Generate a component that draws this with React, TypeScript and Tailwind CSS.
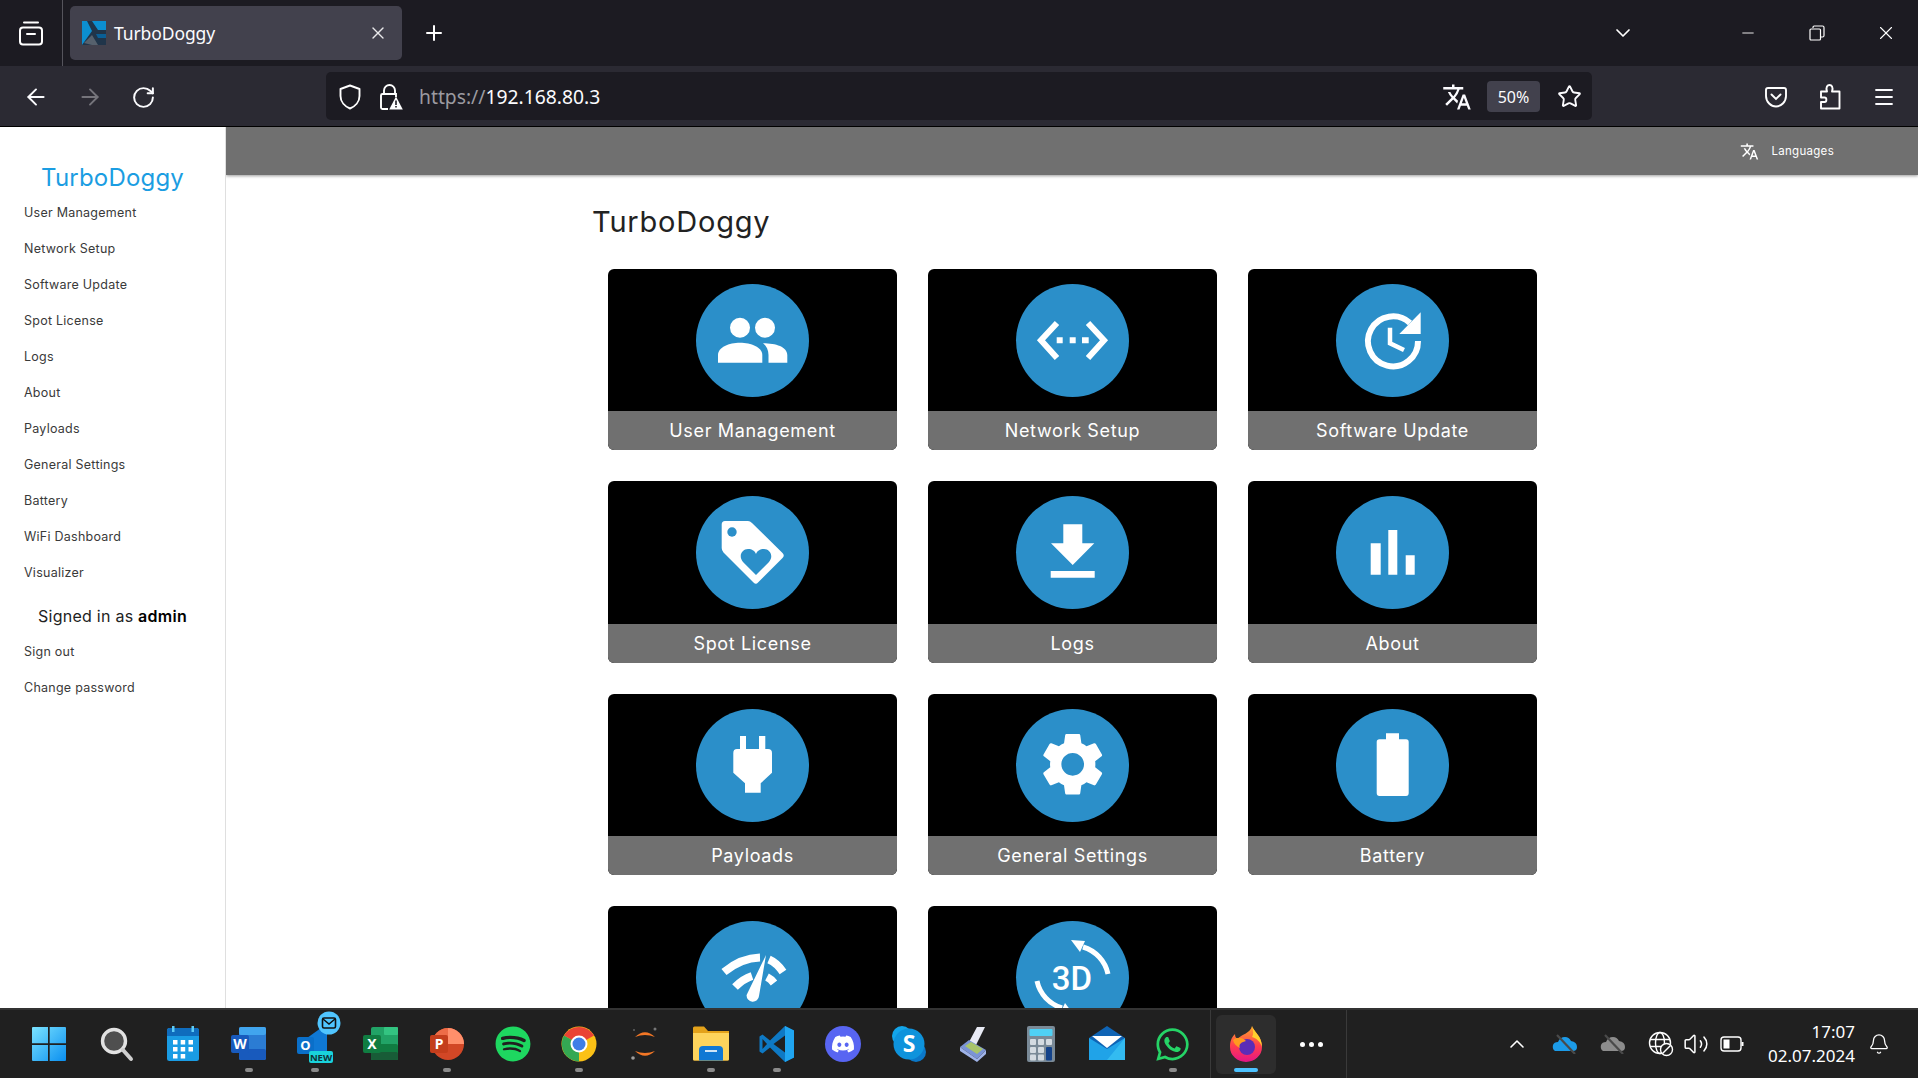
import React from "react";
import { ArrowLeft, ArrowRight, RotateCw, Star, Menu, X, Plus, ChevronDown, ChevronUp, Minus, Bell, Volume2 } from "lucide-react";
import { MdTranslate } from "react-icons/md";
import { FaDiscord, FaSpotify, FaWhatsapp } from "react-icons/fa";

const W = { fill: "#fff" };

const cardIcons: Record<string, React.ReactNode> = {
  users: (
    <g {...W}>
      <circle cx="44" cy="43.7" r="10" />
      <circle cx="69" cy="43.7" r="10" />
      <path d="M22 78.7V71C22 63 33 58.7 44 58.7S66.3 63 66.3 71V78.7Z" />
      <path d="M67 59.3C80 59.3 91.3 63 91.3 71V78.7H72.5V71C72.5 66 70.5 62 67 59.3Z" />
    </g>
  ),
  net: (
    <g>
      <path d="M41 39 25 56.3 41 74M72 39 88 56.3 72 74" fill="none" stroke="#fff" strokeWidth="6" />
      <path d="M40.7 53.3h6v6h-6zM53.7 53.3h6v6h-6zM66 53.3h6.7v6H66z" fill="#fff" />
    </g>
  ),
  update: (
    <g>
      <path d="M74 39A25 25 0 1 0 82 57" fill="none" stroke="#fff" strokeWidth="6" />
      <path d="M84.7 28.3V50H63.3Z" fill="#fff" />
      <path d="M54 43.7V59.3L68 66" fill="none" stroke="#fff" strokeWidth="4.5" />
    </g>
  ),
  tag: (
    <g>
      <path d="M29 25H52Q54 25 56 27L86.5 57Q89 59.5 86.5 62L62 86.5Q60 89 57.5 86.5L27.5 56.5Q25.7 54.5 25.7 52V28.5Q25.7 25 29 25Z" fill="#fff" />
      <circle cx="36" cy="36" r="4.7" fill="#2b8fc9" />
      <path d="M60 79 47 66C42 60 46 53 52 53 56 53 59 55 60 58 61 55 64 53 68 53 74 53 78 60 73 66Z" fill="#2b8fc9" />
    </g>
  ),
  download: <path d="M47.3 28.3H66.3V47.3H78.3L56.7 69 35 47.3H47.3ZM34.7 75H78.7V81.7H34.7Z" fill="#fff" />,
  bars: <path d="M34.7 47.3H44.7V78.7H34.7ZM52.3 34H61.3V78.7H52.3ZM69.7 59.3H78.7V78.7H69.7Z" fill="#fff" />,
  plug: <path d="M44 27H50V40H63V27H69.3V40H72Q76 40 76 44V63.7L64.7 74.3V83.7H49V74.3L37.3 63.7V44Q37.3 40 41 40H44Z" fill="#fff" />,
  gear: (
    <g transform="translate(18.9 17.5) scale(3.15)">
      <path
        fill="#fff"
        d="M19.14 12.94c.04-.3.06-.61.06-.94 0-.32-.02-.64-.07-.94l2.03-1.58c.18-.14.23-.41.12-.61l-1.92-3.32c-.12-.22-.37-.29-.59-.22l-2.39.96c-.5-.38-1.03-.7-1.62-.94l-.36-2.54c-.04-.24-.24-.41-.48-.41h-3.84c-.24 0-.43.17-.47.41l-.36 2.54c-.59.24-1.13.57-1.62.94l-2.39-.96c-.22-.08-.47 0-.59.22L2.74 8.87c-.12.21-.08.47.12.61l2.03 1.58c-.05.3-.09.63-.09.94s.02.64.07.94l-2.03 1.58c-.18.14-.23.41-.12.61l1.92 3.32c.12.22.37.29.59.22l2.39-.96c.5.38 1.03.7 1.62.94l.36 2.54c.05.24.24.41.48.41h3.84c.24 0 .44-.17.47-.41l.36-2.54c.59-.24 1.13-.56 1.62-.94l2.39.96c.22.08.47 0 .59-.22l1.92-3.32c.12-.22.07-.47-.12-.61l-2.01-1.58zM12 15.6c-1.98 0-3.6-1.62-3.6-3.6s1.62-3.6 3.6-3.6 3.6 1.62 3.6 3.6-1.62 3.6-3.6 3.6z"
      />
    </g>
  ),
  battery: <path d="M50 24.3H63V30.3H70Q72.7 30.3 72.7 33V84Q72.7 87 70 87H43.5Q40.7 87 40.7 84V33Q40.7 30.3 43.5 30.3H50Z" fill="#fff" />,
  wifi: (
    <g>
      <path d="M28 51Q45 37 64 36.5M73 38.5Q81 42 87 51" fill="none" stroke="#fff" strokeWidth="8" />
      <path d="M39 66Q47 58 56 55M71 56Q75 58 78 62" fill="none" stroke="#fff" strokeWidth="8" />
      <path d="M70 34 63 75A6.2 6.2 0 1 1 50.6 74Z" fill="#fff" />
    </g>
  ),
  d3: (
    <g>
      <text x="56" y="69" textAnchor="middle" fontSize="33" fontWeight="500" fill="#fff" fontFamily="Roboto, sans-serif">3D</text>
      <path d="M67 26A36 36 0 0 1 92 53" fill="none" stroke="#fff" strokeWidth="5" />
      <path d="M55 19 69 20 64 31Z" fill="#fff" />
      <path d="M21 60A36 36 0 0 0 46 87" fill="none" stroke="#fff" strokeWidth="5" />
      <path d="M58 94 44 93 49 82Z" fill="#fff" />
    </g>
  ),
};

const cards = [
  ["User Management", "users"],
  ["Network Setup", "net"],
  ["Software Update", "update"],
  ["Spot License", "tag"],
  ["Logs", "download"],
  ["About", "bars"],
  ["Payloads", "plug"],
  ["General Settings", "gear"],
  ["Battery", "battery"],
  ["", "wifi"],
  ["", "d3"],
];

const navTop = ["User Management", "Network Setup", "Software Update", "Spot License", "Logs", "About", "Payloads", "General Settings", "Battery", "WiFi Dashboard", "Visualizer"];

const navRow = "h-[36px] flex items-center pl-[24px] pt-[2px] text-[12.5px] tracking-[0.25px] text-[#3a3a3a]";

function Card({ label, icon }: { label: string; icon: string }) {
  return (
    <div className="h-[181.33px] flex flex-col rounded-[6px] overflow-hidden bg-black">
      <div className="flex-1 flex justify-center pt-[15px]">
        <div className="w-[113px] h-[113px] rounded-full bg-[#2b8fc9]">
          <svg viewBox="0 0 113 113" className="w-[113px] h-[113px]">{cardIcons[icon]}</svg>
        </div>
      </div>
      <div className="h-[39px] bg-[#707070] flex items-center justify-center text-white text-[18px] tracking-[0.65px]">{label}</div>
    </div>
  );
}

function Task({ children, dot }: { children: React.ReactNode; dot?: boolean }) {
  return (
    <div className="relative w-[66px] h-full flex items-center justify-center shrink-0">
      {children}
      {dot && <span className="absolute bottom-[6px] left-[29px] w-[8px] h-[4px] rounded-full bg-[#8b8b8b]" />}
    </div>
  );
}

function Ico({ children, size = 36 }: { children: React.ReactNode; size?: number }) {
  return (
    <svg viewBox="0 0 36 36" width={size} height={size} className="overflow-visible">
      {children}
    </svg>
  );
}

export default function App() {
  return (
    <div className="w-[1918px] h-[1078px] flex flex-col overflow-hidden bg-white font-['Inter',sans-serif]">
      {/* tab strip */}
      <div className="h-[66px] shrink-0 bg-[#1c1b22] flex items-center text-white font-['Noto_Sans',sans-serif]">
        <div className="w-[63px] h-full flex items-center justify-center border-r border-[#55545c] shrink-0">
          <svg width="26" height="26" viewBox="0 0 26 26" fill="none" stroke="#fff" strokeWidth="2">
            <rect x="2" y="7.5" width="22" height="17" rx="3" />
            <path d="M6 2.5H20M9 14H17" strokeLinecap="round" />
          </svg>
        </div>
        <div className="ml-[7px] w-[332px] h-[54px] rounded-[5px] bg-[#42414d] flex items-center pl-[12px] pr-[14px]">
          <svg width="24" height="24" viewBox="0 0 24 24" className="shrink-0">
            <rect width="24" height="24" fill="#0c8fd0" />
            <path d="M0 24 L10 10 L5 0 H10 L16 9 H24 V24Z" fill="#20354a" />
            <path d="M14 13H24V17H16Z" fill="#0a5f96" />
            <path d="M2 22 10 14 16 24H10Z" fill="#56616d" />
          </svg>
          <span className="ml-[8px] text-[17.5px] tracking-[-0.1px] text-[#fbfbfe]">TurboDoggy</span>
          <X className="ml-auto" size={20} strokeWidth={1.6} color="#e8e8ea" />
        </div>
        <Plus className="ml-[20px]" size={24} strokeWidth={2} />
        <div className="flex-1" />
        <ChevronDown className="mr-[104px]" size={24} strokeWidth={1.7} />
        <Minus className="mr-[52px]" size={18} strokeWidth={1.2} />
        <svg width="16" height="16" viewBox="0 0 16 16" fill="none" stroke="#fff" strokeWidth="1.2" className="mr-[50px]">
          <rect x="1" y="4" width="10.5" height="11" rx="1" />
          <path d="M4 3V2.2Q4 1 5.2 1H13.5Q15 1 15 2.5V10.5Q15 12 13.5 12H12" />
        </svg>
        <X className="mr-[21px]" size={22} strokeWidth={1.2} />
      </div>

      {/* toolbar */}
      <div className="h-[61px] shrink-0 bg-[#2b2a33] border-b border-black flex items-center text-[#fbfbfe] font-['Noto_Sans',sans-serif]">
        <ArrowLeft className="ml-[23px] mt-[2px]" size={26} strokeWidth={1.8} />
        <ArrowRight className="ml-[28px] mt-[2px]" size={26} strokeWidth={1.8} color="#75747b" />
        <RotateCw className="ml-[28px] mt-[2px]" size={25} strokeWidth={1.9} />
        <div className="ml-[170px] w-[1266px] h-[48px] rounded-[5px] bg-[#1c1b22] flex items-center pt-[1px]">
          <svg className="ml-[13px]" width="22" height="26" viewBox="0 0 22 26" fill="none" stroke="#fff" strokeWidth="1.9">
            <path d="M11 1.5 20.5 5V12C20.5 18 16 22.5 11 24.5 6 22.5 1.5 18 1.5 12V5Z" strokeLinejoin="round" />
          </svg>
          <svg className="ml-[18px]" width="24" height="28" viewBox="0 0 24 28" fill="none">
            <path d="M5 11V7.5A5.5 5.5 0 0 1 16 7.5V11" stroke="#fff" strokeWidth="1.9" />
            <path d="M9 26H3.5Q2 26 2 24.5V12.5Q2 11 3.5 11H17V14" stroke="#fff" strokeWidth="1.9" />
            <path d="M17 13.5 23.8 26.5H10.2Z" fill="#fff" />
            <path d="M16.2 17.5H17.8V22H16.2ZM16.2 23H17.8V24.6H16.2Z" fill="#1c1b22" />
          </svg>
          <span className="ml-[16px] pt-[1px] text-[19.3px] leading-none whitespace-nowrap">
            <span className="text-[#9b9aa0]">https://</span>192.168.80.3
          </span>
          <div className="flex-1" />
          <MdTranslate size={30} />
          <div className="ml-[15px] w-[53px] h-[31px] rounded-[4px] bg-[#42414d] flex items-center justify-center text-[16px]">50%</div>
          <Star className="ml-[17px] mr-[10px]" size={25} strokeWidth={1.8} />
        </div>
        <svg className="ml-[173px] mt-[1px]" width="22" height="22" viewBox="0 0 22 22" fill="none" stroke="#fff" strokeWidth="1.9">
          <path d="M3 2H19Q21 2 21 4V10C21 16 16 20.5 11 20.5S1 16 1 10V4Q1 2 3 2Z" />
          <path d="M6.5 8.5 11 13 15.5 8.5" strokeLinecap="round" />
        </svg>
        <svg className="ml-[32px] mt-[1px]" width="22" height="26" viewBox="0 0 22 26" fill="none" stroke="#fff" strokeWidth="1.9">
          <path d="M2 24.5V18H5.5C8 18 8 13.5 5.5 13.5H2V7.5H8C6.5 3 8.5 1 10.5 1S14.5 3 13 7.5H20.5V24.5Z" strokeLinejoin="round" />
        </svg>
        <Menu className="ml-[31px] mt-[1px]" size={24} strokeWidth={1.8} />
      </div>

      {/* page */}
      <div className="flex-1 min-h-0 flex overflow-hidden">
        <aside className="w-[226px] shrink-0 border-r border-[#dfdfdf] pt-[34px] text-[#333] bg-white">
          <div className="h-[33px] flex items-center justify-center text-[24px] text-[#1b9de2] tracking-[0.2px]">TurboDoggy</div>
          {navTop.map((n) => (
            <div key={n} className={navRow}>{n}</div>
          ))}
          <div className="mt-[8px] h-[35px] flex items-center justify-center text-[16px] tracking-[0.25px] text-[#222]">
            Signed in as&nbsp;<b className="font-semibold text-black">admin</b>
          </div>
          <div className={navRow}>Sign out</div>
          <div className={navRow}>Change password</div>
        </aside>
        <div className="flex-1 min-w-0 flex flex-col overflow-hidden">
          <div className="h-[48px] shrink-0 bg-[#707070] shadow-[0_1px_3px_rgba(0,0,0,0.4)] flex items-center justify-end pr-[84px] text-white">
            <MdTranslate size={19} />
            <span className="ml-[12px] pt-[2px] text-[11.5px] tracking-[0.3px]">Languages</span>
          </div>
          <div className="flex-1 min-h-0 overflow-hidden pl-[366px]">
            <h1 className="mt-[27px] h-[38px] flex items-center text-[29px] leading-none text-[#222] tracking-[0.8px]">TurboDoggy</h1>
            <div className="mt-[29px] ml-[16px] grid grid-cols-[289px_289px_289px] gap-x-[31px] gap-y-[31px]">
              {cards.map(([l, i]) => (
                <Card key={i} label={l} icon={i} />
              ))}
            </div>
          </div>
        </div>
      </div>

      {/* taskbar */}
      <div className="h-[70px] shrink-0 bg-[#202020] border-t-2 border-[#333] flex items-center pl-[15px] font-['Noto_Sans',sans-serif] text-white">
        <div className="w-[68.5px] h-full shrink-0 flex items-center justify-center">
          <Ico>
            <defs>
              <linearGradient id="win" x1="0" y1="0" x2="1" y2="1">
                <stop offset="0" stopColor="#7be3ff" />
                <stop offset="1" stopColor="#0a8ff0" />
              </linearGradient>
            </defs>
            <path d="M1 2Q1 1 2 1H17V17.3H1ZM18.7 1H34Q35 1 35 2V17.3H18.7ZM1 19H17V35H2Q1 35 1 34ZM18.7 19H35V34Q35 35 34 35H18.7Z" fill="url(#win)" />
          </Ico>
        </div>
        <Task>
          <Ico>
            <circle cx="15" cy="15" r="11.5" fill="#4f4f4f" stroke="#e2e2e2" strokeWidth="3.4" />
            <path d="M24 24 32 33" stroke="#cfcfcf" strokeWidth="4" strokeLinecap="round" />
          </Ico>
        </Task>
        <Task>
          <Ico>
            <rect x="2" y="2" width="32" height="33" rx="2.5" fill="#1a9ce4" />
            <path d="M2 10V4.5Q2 2 4.5 2H31.5Q34 2 34 4.5V10Z" fill="#0f6cbd" />
            <path d="M7 0h2.5v6H7zM26.5 0H29v6h-2.5z" fill="#5ecbf5" />
            <g fill="#fff">
              <rect x="8" y="14" width="4.5" height="4.5" /><rect x="15.7" y="14" width="4.5" height="4.5" /><rect x="23.5" y="14" width="4.5" height="4.5" />
              <rect x="8" y="21" width="4.5" height="4.5" /><rect x="15.7" y="21" width="4.5" height="4.5" /><rect x="23.5" y="21" width="4.5" height="4.5" />
              <rect x="8" y="28" width="4.5" height="4.5" /><rect x="15.7" y="28" width="4.5" height="4.5" />
            </g>
          </Ico>
        </Task>
        <Task dot>
          <Ico>
            <rect x="8" y="1" width="27" height="33" rx="2" fill="#2b7cd3" />
            <rect x="8" y="1" width="27" height="8" rx="2" fill="#41a5ee" />
            <rect x="8" y="23" width="27" height="11" rx="2" fill="#185abd" />
            <rect x="0" y="9" width="18" height="18" rx="2" fill="#185abd" />
            <text x="9" y="23" textAnchor="middle" fontSize="14" fontWeight="700" fill="#fff">W</text>
          </Ico>
        </Task>
        <Task dot>
          <Ico size={36}>
            <path d="M10 12 24 2H30V26H10Z" fill="#0f78d4" />
            <rect x="0" y="11" width="17" height="17" rx="2" fill="#0a6fc9" />
            <text x="8.5" y="24" textAnchor="middle" fontSize="13" fontWeight="700" fill="#fff">O</text>
            <circle cx="32" cy="-3" r="11.5" fill="#50c5ff" />
            <rect x="25.5" y="-8" width="13" height="10" rx="1.5" fill="none" stroke="#111" strokeWidth="1.6" />
            <path d="M26 -7 32 -2 38 -7" fill="none" stroke="#111" strokeWidth="1.5" />
            <rect x="12" y="25" width="24" height="12" rx="2" fill="#19d3dc" />
            <text x="24" y="34.5" textAnchor="middle" fontSize="9.5" fontWeight="700" fill="#10333a">NEW</text>
          </Ico>
        </Task>
        <Task>
          <Ico>
            <rect x="8" y="1" width="27" height="33" rx="2" fill="#21a366" />
            <rect x="21" y="1" width="14" height="8" rx="1" fill="#33c481" />
            <rect x="8" y="18" width="27" height="16" rx="2" fill="#107c41" />
            <rect x="8" y="26" width="27" height="8" rx="2" fill="#185c37" />
            <rect x="0" y="9" width="18" height="18" rx="2" fill="#107c41" />
            <text x="9" y="23" textAnchor="middle" fontSize="14" fontWeight="700" fill="#fff">X</text>
          </Ico>
        </Task>
        <Task dot>
          <Ico>
            <circle cx="19" cy="18" r="16" fill="#d24726" />
            <path d="M19 2A16 16 0 0 1 35 18H19Z" fill="#ff8f6b" />
            <path d="M3 18A16 16 0 0 1 19 2V18Z" fill="#ed6c47" />
            <rect x="1" y="9" width="18" height="18" rx="2" fill="#c43e1c" />
            <text x="10" y="23" textAnchor="middle" fontSize="14" fontWeight="700" fill="#fff">P</text>
          </Ico>
        </Task>
        <Task>
          <FaSpotify size={36} color="#1ed760" />
        </Task>
        <Task dot>
          <Ico>
            <circle cx="18" cy="18" r="17.5" fill="#fbc116" />
            <path d="M18 18 3 9.5A17.5 17.5 0 0 1 33 9.5Z" fill="#ea4335" />
            <path d="M18 18 3 9.5A17.5 17.5 0 0 0 18 35.5Z" fill="#34a853" />
            <circle cx="18" cy="18" r="8.5" fill="#fff" />
            <circle cx="18" cy="18" r="6.5" fill="#3f7ee8" />
          </Ico>
        </Task>
        <Task>
          <Ico>
            <path d="M8 11Q18 1.5 28 11 18 7 8 11ZM8 25Q18 34.5 28 25 18 29 8 25Z" fill="#f37726" />
            <circle cx="28" cy="3" r="1.5" fill="#767677" />
            <circle cx="6" cy="32" r="1.8" fill="#9e9e9e" />
            <circle cx="7" cy="4" r="1" fill="#616262" />
          </Ico>
        </Task>
        <Task dot>
          <Ico>
            <path d="M0 2Q0 .5 1.5 .5H11L15 5H36V33Q36 34.5 34.5 34.5H1.5Q0 34.5 0 33Z" fill="#e3a21a" />
            <path d="M0 7H36V33Q36 34.5 34.5 34.5H1.5Q0 34.5 0 33Z" fill="#fdd45c" />
            <path d="M6 34.5V24Q6 20 10 20H26Q30 20 30 24V34.5Z" fill="#0f78d4" />
            <rect x="12" y="24" width="12" height="2" fill="#cde4f7" />
          </Ico>
        </Task>
        <Task dot>
          <Ico>
            <path d="M26 0 35 4.5V31.5L26 36 11 21.5 3.5 27.5 .5 25.5V10.5L3.5 8.5 11 14.5Z" fill="#0e79c4" />
            <path d="M26 0 35 4.5V31.5L26 36Z" fill="#20a5f0" />
            <path d="M26 9.5 14.5 18 26 26.5Z" fill="#202020" />
            <path d="M3.5 13 8 18 3.5 23Z" fill="#202020" />
          </Ico>
        </Task>
        <Task>
          <Ico>
            <circle cx="18" cy="18" r="18" fill="#5865f2" />
          </Ico>
          <FaDiscord className="absolute" size={24} color="#fff" />
        </Task>
        <Task>
          <Ico>
            <circle cx="11" cy="10" r="10" fill="#12a5ea" />
            <circle cx="25" cy="26" r="10" fill="#0b78c9" />
            <circle cx="18" cy="18" r="15.5" fill="#0e93dc" />
            <text x="18" y="26" textAnchor="middle" fontSize="23" fontWeight="700" fill="#fff">S</text>
          </Ico>
        </Task>
        <Task>
          <Ico>
            <path d="M12 16 20 1H28L19 19Z" fill="#e8eaf4" />
            <path d="M3 21 12 14 29 24 20 33Z" fill="#7b94d6" />
            <path d="M8 20 14 16 26 23 20 28Z" fill="#a8c46a" />
            <path d="M3 21V25L20 36 29 28V24L20 33Z" fill="#9fb3e8" />
          </Ico>
        </Task>
        <Task>
          <Ico>
            <rect x="4" y="0" width="28" height="36" rx="2" fill="#7a8a97" />
            <rect x="6.5" y="3" width="23" height="7" rx="1" fill="#4fd1f5" />
            <g fill="#d4dbe1">
              <rect x="7" y="13" width="6" height="6" rx="1" /><rect x="15" y="13" width="6" height="6" rx="1" /><rect x="23" y="13" width="6" height="6" rx="1" />
              <rect x="7" y="21" width="6" height="6" rx="1" /><rect x="15" y="21" width="6" height="6" rx="1" />
              <rect x="7" y="28.5" width="6" height="6" rx="1" /><rect x="15" y="28.5" width="6" height="6" rx="1" />
            </g>
            <rect x="23" y="21" width="6" height="13.5" rx="1" fill="#14438a" />
          </Ico>
        </Task>
        <Task>
          <Ico>
            <path d="M0 12 18 0 36 12V34H0Z" fill="#0f64b5" />
            <path d="M3 10 33 10 18 22Z" fill="#fff" />
            <path d="M0 12 18 23 36 12V34H0Z" fill="#20a3e8" />
            <path d="M36 12V34H18L36 12Z" fill="#3cc4f5" opacity="0.7" />
          </Ico>
        </Task>
        <Task dot>
          <FaWhatsapp size={37} color="#25d366" />
        </Task>
        <div className="w-px h-full bg-[#3a3a3a] ml-[4.5px] shrink-0" />
        <div className="ml-[5px] w-[60px] h-[59px] rounded-[6px] bg-[#2d2d2d] flex items-center justify-center relative shrink-0">
          <svg viewBox="0 0 36 36" width="36" height="36">
            <defs>
              <linearGradient id="ff" x1="0" y1="0" x2="0" y2="1">
                <stop offset="0" stopColor="#ffa82a" />
                <stop offset=".55" stopColor="#ff3d4e" />
                <stop offset="1" stopColor="#e31587" />
              </linearGradient>
            </defs>
            <path d="M24 0C26 6 34 10 34 21A16 15 0 0 1 2 21C2 16 3 12 7 8 7 11 8 12 10 13 13 8 22 8 24 0Z" fill="url(#ff)" />
            <path d="M24 0C26 6 34 10 34 21 32 15 28 12 24 11 26 8 25 4 24 0Z" fill="#ffd02e" />
            <circle cx="19" cy="21" r="8" fill="#5b2cb7" />
            <path d="M5 14C9 11 14 11 18 15 14 16 10 18 12 22 8 20 6 18 5 14Z" fill="#ff9a1f" />
          </svg>
          <span className="absolute bottom-[2px] left-[18px] w-[24px] h-[4px] rounded-full bg-[#4cc2ff]" />
        </div>
        <div className="w-[70px] h-full flex items-center justify-center gap-[4px] shrink-0">
          <span className="w-[5px] h-[5px] rounded-full bg-white" />
          <span className="w-[5px] h-[5px] rounded-full bg-white" />
          <span className="w-[5px] h-[5px] rounded-full bg-white" />
        </div>
        <div className="w-px h-full bg-[#3a3a3a] shrink-0" />
        <div className="flex-1" />
        <ChevronUp size={24} strokeWidth={1.6} />
        <svg className="ml-[23px]" width="26" height="20" viewBox="0 0 26 20">
          <path d="M3 17Q0 15 1 11 2 8 6 8 8 3 13 3 17 3 19 7 25 8 25 13 25 17 21 17Z" fill="#1c9be8" />
          <path d="M5 1 23 20" stroke="#4a4a4a" strokeWidth="2.2" />
        </svg>
        <svg className="ml-[22px]" width="26" height="20" viewBox="0 0 26 20">
          <path d="M3 17Q0 15 1 11 2 8 6 8 8 3 13 3 17 3 19 7 25 8 25 13 25 17 21 17Z" fill="#8c8c8c" />
          <path d="M5 1 23 20" stroke="#4a4a4a" strokeWidth="2.2" />
        </svg>
        <svg className="ml-[22px]" width="26" height="26" viewBox="0 0 26 26" fill="none" stroke="#fff" strokeWidth="1.4">
          <circle cx="12" cy="12" r="10.5" />
          <ellipse cx="12" cy="12" rx="4.5" ry="10.5" />
          <path d="M2 8.5H22M2 15.5H14" />
          <circle cx="18.5" cy="18.5" r="6" fill="#202020" />
          <path d="M14.5 22.5 22.5 14.5" />
        </svg>
        <Volume2 className="ml-[9px]" size={26} strokeWidth={1.4} />
        <svg className="ml-[11px]" width="24" height="16" viewBox="0 0 24 16" fill="none" stroke="#fff" strokeWidth="1.4">
          <rect x="1" y="1" width="20" height="14" rx="3" />
          <rect x="3.5" y="3.5" width="6" height="9" fill="#fff" stroke="none" />
          <path d="M22.5 6V10" strokeWidth="2" />
        </svg>
        <div className="ml-[24px] flex flex-col items-end text-[17px] leading-[24px] text-white">
          <span>17:07</span>
          <span>02.07.2024</span>
        </div>
        <Bell className="ml-[13px] mr-[28px]" size={22} strokeWidth={1.4} />
      </div>
    </div>
  );
}
